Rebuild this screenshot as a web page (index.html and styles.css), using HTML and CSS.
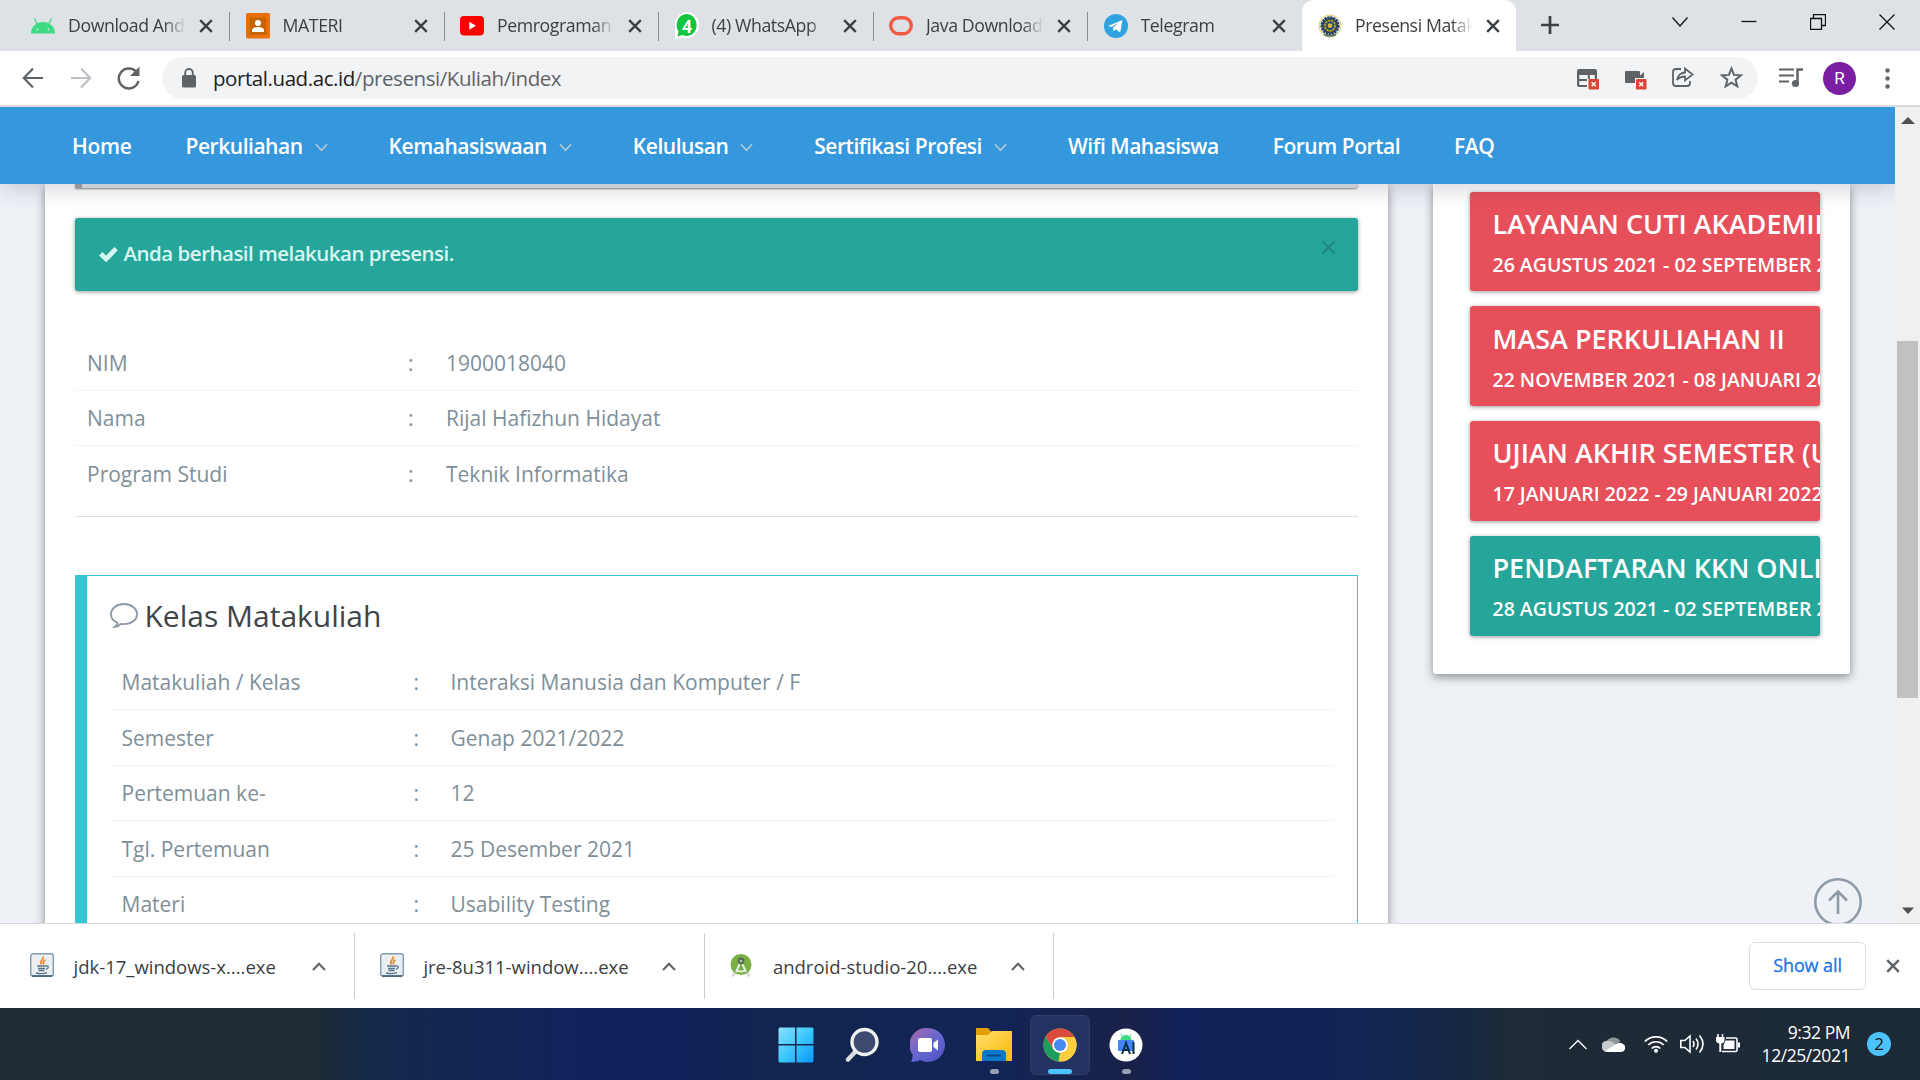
FILE: index.html
```html
<!DOCTYPE html>
<html lang="id">
<head>
<meta charset="utf-8">
<title>Presensi Matakuliah</title>
<link rel="stylesheet" href="styles.css">
</head>
<body>
<svg width="0" height="0" class="defs" aria-hidden="true">
  <symbol id="x" viewBox="0 0 14 14"><path d="M1.2 1.2l11.6 11.6M12.8 1.2L1.2 12.8" fill="none" stroke="currentColor" stroke-width="2.4"/></symbol>
  <symbol id="down" viewBox="0 0 14 9"><path d="M1 1l6 6.5L13 1" fill="none" stroke="currentColor" stroke-width="1.9"/></symbol>
  <symbol id="up" viewBox="0 0 14 9"><path d="M1 8l6-6.3L13 8" fill="none" stroke="currentColor" stroke-width="2.1"/></symbol>
  <symbol id="java" viewBox="0 0 24 24">
    <rect x=".7" y=".7" width="22.6" height="22.6" rx="2.5" fill="#eceff1" stroke="#7f9bb0" stroke-width="1.4"/>
    <path d="M2 23h20" stroke="#3f6076" stroke-width="1.6"/>
    <path d="M13 3.500c2 2.500-4.500 4-1.500 8M15.500 7c-3 1.500-2.500 3-1.500 4.500" fill="none" stroke="#ec8a2e" stroke-width="1.700"/>
    <path d="M7 13h9M8 15.500h7M8.500 17.500h6M6 20q6 1.500 11-.4M16 13q3-.3 2 1.800-.5 1-2 1.500" fill="none" stroke="#55758c" stroke-width="1.300"/>
  </symbol>
</svg>

<header class="tabs">
  <div class="tab">
    <svg class="fav" viewBox="0 0 24 24"><path d="M0 19.500a12 11.500 0 0 1 24 0z" fill="#3ddc84"/><path d="M6 10L3.600 4.500M18 10l2.400-5.500" stroke="#3ddc84" stroke-width="1.300"/><circle cx="6.500" cy="15.500" r="1" fill="#dee1e6"/><circle cx="17.500" cy="15.500" r="1" fill="#dee1e6"/></svg>
    <span class="tab-title">Download Android</span><svg class="tab-x"><use href="#x"/></svg>
  </div>
  <div class="tab sep">
    <svg class="fav" viewBox="0 0 24 24"><rect y="-1" width="24" height="25.500" rx="1.500" fill="#e8710a"/><rect x="3.500" y="3.500" width="17" height="17" fill="#c26401"/><circle cx="12" cy="9" r="3" fill="#fff"/><path d="M6 18v-2c0-4 12-4 12 0v2z" fill="#fff"/></svg>
    <span class="tab-title">MATERI</span><svg class="tab-x"><use href="#x"/></svg>
  </div>
  <div class="tab sep">
    <svg class="fav" viewBox="0 0 24 24"><rect y="2" width="24" height="19.500" rx="4" fill="#f00"/><path d="M9.300 7.700v8l6.700-4z" fill="#fff"/></svg>
    <span class="tab-title">Pemrograman Lanjut</span><svg class="tab-x"><use href="#x"/></svg>
  </div>
  <div class="tab sep">
    <svg class="fav" viewBox="0 0 24 24"><path d="M0 25V12A12 13 0 1 1 12 24l-6 .3z" fill="#fff"/><path d="M2.500 22.500l1-5a10 11 0 1 1 4 3.600z" fill="#12c53f"/><text x="12" y="18.500" text-anchor="middle" class="wa">4</text></svg>
    <span class="tab-title">(4) WhatsApp</span><svg class="tab-x"><use href="#x"/></svg>
  </div>
  <div class="tab sep">
    <svg class="fav" viewBox="0 0 24 24"><rect x="1.700" y="3.700" width="20.600" height="16" rx="8" fill="none" stroke="#f15b45" stroke-width="3.400"/></svg>
    <span class="tab-title">Java Downloads</span><svg class="tab-x"><use href="#x"/></svg>
  </div>
  <div class="tab sep">
    <svg class="fav" viewBox="0 0 24 24"><circle cx="12" cy="12" r="12" fill="#2fa3e0"/><path d="M4 12L18.500 6 16.200 18.500l-4.500-3.200-2.200 2.200-.4-4 6-5-7.600 4.600z" fill="#fff"/></svg>
    <span class="tab-title">Telegram</span><svg class="tab-x"><use href="#x"/></svg>
  </div>
  <div class="tab active">
    <svg class="fav" viewBox="0 0 24 24"><circle cx="12" cy="12" r="11" fill="#f4f0d8" stroke="#e0cd82" stroke-width="1"/><circle cx="12" cy="11.700" r="8" fill="#5c5b3c" stroke="#1d3e68" stroke-width="3" stroke-dasharray="2.200 .7"/><circle cx="12" cy="11.700" r="5" fill="#1a4d82" stroke="#d0a72b" stroke-width="1.500" stroke-dasharray="2 1"/><circle cx="12" cy="11.700" r="2.400" fill="#e0b329"/><path d="M6 20.500q6 3 12 0" fill="none" stroke="#54735f" stroke-width="1.500"/></svg>
    <span class="tab-title">Presensi Matakuliah</span><svg class="tab-x"><use href="#x"/></svg>
  </div>
  <svg class="plus" viewBox="0 0 18 18"><path d="M9 0v18M0 9h18" stroke="#3c4043" stroke-width="2.700"/></svg>
  <div class="win">
    <svg width="16" height="16" viewBox="0 0 16 16"><path d="M.5 3.500L8 12l7.500-8.500"/></svg>
    <svg width="16" height="16" viewBox="0 0 16 16"><path d="M.5 7.500h15"/></svg>
    <svg width="16" height="16" viewBox="0 0 16 16"><path d="M.5 4.500h11v11H.5zM3.500 4.500v-4h12v11h-4"/></svg>
    <svg width="16" height="16" viewBox="0 0 16 16"><path d="M.5.500l15 15M15.500.500l-15 15"/></svg>
  </div>
</header>

<div class="toolbar">
  <svg class="tb back" viewBox="0 0 24 24"><path d="M22 12H3.500M12 2.500L2.800 12l9.200 9.500" fill="none" stroke="#5f6368" stroke-width="2.200"/></svg>
  <svg class="tb fwd" viewBox="0 0 24 24"><path d="M2 12h18.500M12 2.500l9.200 9.500-9.200 9.500" fill="none" stroke="#bdc1c6" stroke-width="2.200"/></svg>
  <svg class="tb" viewBox="0 0 24 24"><path d="M19.500 6A10 10 0 1 0 21.500 15" fill="none" stroke="#5f6368" stroke-width="2.500"/><path d="M22.500 .5v9.500h-9.500z" fill="#5f6368"/></svg>
  <div class="omnibox">
    <svg width="14" height="20" viewBox="0 0 14 20"><rect y="7" width="14" height="12.500" rx="1.600" fill="#5f6368"/><path d="M3.200 8V4.800a3.800 3.800 0 0 1 7.600 0V8" fill="none" stroke="#5f6368" stroke-width="1.900"/></svg>
    <span class="url"><b>portal.uad.ac.id</b>/presensi/Kuliah/index</span>
    <svg class="ob low" viewBox="0 0 24 24"><path d="M2 1h16a2 2 0 0 1 2 2v8h-2.200V7h-5v4h-2V7H2.300v4H10v2H2.300v4H10v2H2a2 2 0 0 1-2-2V3a2 2 0 0 1 2-2z" fill="#5f6368"/><rect x="11.500" y="11" width="10.500" height="10.500" rx="1" fill="#dc4437"/><path d="M14.700 14.200l4 4M18.700 14.200l-4 4" stroke="#fff" stroke-width="1.500"/></svg>
    <svg class="ob low" viewBox="0 0 24 24"><path d="M1 3h13a1 1 0 0 1 1 1v3.500L19 4v6h-9v5H1a1 1 0 0 1-1-1V4a1 1 0 0 1 1-1z" fill="#5f6368"/><rect x="11" y="11" width="10.500" height="10.500" rx="1" fill="#dc4437"/><path d="M14.200 14.200l4 4M18.200 14.200l-4 4" stroke="#fff" stroke-width="1.500"/></svg>
    <svg class="ob share" viewBox="0 0 24 24" fill="none" stroke="#5f6368" stroke-width="1.800"><path d="M9 3H4a3 3 0 0 0-3 3V17a3 3 0 0 0 3 3h11a3 3 0 0 0 3-3v-2"/><path d="M5 14c1-5 3-7 8-7.500V2.500l7.500 6-7.500 6v-4c-4 0-6 1-8 3.500z"/></svg>
    <svg class="ob star" viewBox="0 0 24 24"><path d="M11.500 2.500l2.500 6.400 6.900.4-5.300 4.400 1.700 6.600-5.800-3.600-5.800 3.600 1.700-6.600L2 9.300l6.900-.4z" fill="none" stroke="#5f6368" stroke-width="2"/></svg>
  </div>
  <svg class="music" viewBox="0 0 24 20"><path d="M0 1.500h15M0 7.500h15M0 13.500h10" stroke="#5f6368" stroke-width="2"/><path d="M18.500 15V1.500H24" fill="none" stroke="#5f6368" stroke-width="2.500"/><circle cx="16.500" cy="15.500" r="3.600" fill="#5f6368"/></svg>
  <span class="avatar">R</span>
  <svg class="dots" viewBox="0 0 5 21"><g fill="#5f6368"><circle cx="2.500" cy="2.500" r="2.200"/><circle cx="2.500" cy="10.500" r="2.200"/><circle cx="2.500" cy="18.500" r="2.200"/></g></svg>
</div>

<div class="view">
  <div class="site">
    <nav class="nav">
      <a>Home</a>
      <a>Perkuliahan<svg><use href="#down"/></svg></a>
      <a>Kemahasiswaan<svg><use href="#down"/></svg></a>
      <a>Kelulusan<svg><use href="#down"/></svg></a>
      <a>Sertifikasi Profesi<svg><use href="#down"/></svg></a>
      <a>Wifi Mahasiswa</a>
      <a>Forum Portal</a>
      <a>FAQ</a>
    </nav>
    <div class="cols">
      <main class="panel">
        <div class="note"></div>
        <div class="alert">
          <svg class="check" viewBox="0 0 20 16"><path d="M1.800 7.800L7.500 13.200 18 2.400" fill="none" stroke="#d9f6f2" stroke-width="5"/></svg>
          <span>Anda berhasil melakukan presensi.</span>
          <svg class="close"><use href="#x"/></svg>
        </div>
        <div class="table student">
          <div class="row"><span>NIM</span><span>:</span><span>1900018040</span></div>
          <div class="row"><span>Nama</span><span>:</span><span>Rijal Hafizhun Hidayat</span></div>
          <div class="row"><span>Program Studi</span><span>:</span><span>Teknik Informatika</span></div>
        </div>
        <hr>
        <section class="kelas">
          <h3><svg viewBox="0 0 28 25"><path d="M7.500 19.800C3.500 18.200 1 15.200 1 11.300 1 5.600 6.600 1 14 1s13 4.500 13 10.200-5.800 9.900-13 9.900q-2 0-3.200-.3Q8.500 23.500 5 23.800q2.300-1.800 2.500-4z" fill="none" stroke="#8d98a8" stroke-width="1.900"/></svg><span>Kelas Matakuliah</span></h3>
          <div class="table">
            <div class="row"><span>Matakuliah / Kelas</span><span>:</span><span>Interaksi Manusia dan Komputer / F</span></div>
            <div class="row"><span>Semester</span><span>:</span><span>Genap 2021/2022</span></div>
            <div class="row"><span>Pertemuan ke-</span><span>:</span><span>12</span></div>
            <div class="row"><span>Tgl. Pertemuan</span><span>:</span><span>25 Desember 2021</span></div>
            <div class="row"><span>Materi</span><span>:</span><span>Usability Testing</span></div>
          </div>
        </section>
      </main>
      <aside class="panel side">
        <div class="event"><h4>LAYANAN CUTI AKADEMIK</h4><p>26 AGUSTUS 2021 - 02 SEPTEMBER 2021</p></div>
        <div class="event"><h4>MASA PERKULIAHAN II</h4><p>22 NOVEMBER 2021 - 08 JANUARI 2022</p></div>
        <div class="event"><h4>UJIAN AKHIR SEMESTER (UAS)</h4><p>17 JANUARI 2022 - 29 JANUARI 2022</p></div>
        <div class="event green"><h4>PENDAFTARAN KKN ONLINE</h4><p>28 AGUSTUS 2021 - 02 SEPTEMBER 2021</p></div>
      </aside>
    </div>
    <svg class="to-top" viewBox="0 0 48 48" fill="none" stroke="#8f9aa7" stroke-width="2.600"><circle cx="24" cy="24" r="22.700"/><path d="M24 36V14M15 22.500l9-9 9 9"/></svg>
  </div>
  <div class="scroll">
    <svg width="14" height="7" viewBox="0 0 14 7"><path d="M7 0l7 7H0z" fill="#505050"/></svg>
    <div class="track"><div class="thumb"></div></div>
    <svg width="12" height="7" viewBox="0 0 12 7"><path d="M6 7l6-6.500H0z" fill="#505050"/></svg>
  </div>
</div>

<div class="downloads">
  <div class="dl"><svg class="dl-i"><use href="#java"/></svg><span>jdk-17_windows-x....exe</span><svg class="dl-u"><use href="#up"/></svg></div>
  <div class="dl"><svg class="dl-i"><use href="#java"/></svg><span>jre-8u311-window....exe</span><svg class="dl-u"><use href="#up"/></svg></div>
  <div class="dl"><svg class="dl-i" viewBox="0 0 24 24"><path d="M8 15L3.500 23.500M16 15l4.500 8.500" stroke="#d5d5d5" stroke-width="2.400"/><circle cx="12" cy="11.500" r="10.500" fill="#78b043"/><path d="M12 8l-5 11M12 8l5 11M7 17q5 3 10 0" fill="none" stroke="#e8f0e0" stroke-width="2"/><circle cx="12" cy="8" r="3.400" fill="#5c6b60"/><circle cx="12" cy="8" r="1.300" fill="#b4c8ae"/></svg><span>android-studio-20....exe</span><svg class="dl-u"><use href="#up"/></svg></div>
  <div class="show-all">Show all</div>
  <svg class="dl-x"><use href="#x"/></svg>
</div>

<footer class="taskbar">
  <div class="apps">
    <div class="app"><svg width="36" height="36" viewBox="0 0 36 36"><defs><linearGradient id="w" x1="0" y1="0" x2="1" y2="1"><stop offset="0" stop-color="#8be0ff"/><stop offset=".5" stop-color="#3cc8fb"/><stop offset="1" stop-color="#0a96fa"/></linearGradient></defs><path d="M1.500.500H17v16.500H.500V1.500zM18.500.500h16l1 1V17h-17zM.500 18.500H17v17H1.500l-1-1zM18.500 18.500h17v16l-1 1h-16z" fill="url(#w)"/></svg></div>
    <div class="app"><svg width="34" height="36" viewBox="0 0 34 36"><path d="M10.500 24.500L3 32.500" stroke="#d9dcdf" stroke-width="4.500" stroke-linecap="round"/><circle cx="19.500" cy="15" r="12.500" fill="#3c4a6f" stroke="#f0f1f2" stroke-width="3.400"/></svg></div>
    <div class="app"><svg width="36" height="36" viewBox="0 0 36 36"><defs><linearGradient id="c" x1="0" y1=".1" x2=".8" y2="1"><stop offset="0" stop-color="#a26bae"/><stop offset=".55" stop-color="#6467d2"/><stop offset="1" stop-color="#5353c4"/></linearGradient></defs><path d="M18 1a17 17 0 1 1-8 32q-4 2.500-9 1.500 2-3 1.500-7A17 17 0 0 1 18 1z" fill="url(#c)"/><rect x="8" y="11" width="14" height="14" rx="2" fill="#fff"/><path d="M23.500 16l4.500-3.500v11L23.500 20z" fill="#fff"/></svg></div>
    <div class="app"><svg width="36" height="34" viewBox="0 0 36 34"><defs><linearGradient id="f" x1="0" y1="0" x2="1" y2="1"><stop offset="0" stop-color="#ffdf6d"/><stop offset="1" stop-color="#fcb90a"/></linearGradient></defs><path d="M0 0h12l3.500 4v8H0z" fill="#e3a006"/><path d="M0 7h12l4-4h20v30H0z" fill="url(#f)"/><path d="M6 33v-7q0-4 4-4h16q4 0 4 4v7z" fill="#0b78ca"/><path d="M11 27.500h14" stroke="#084c8c" stroke-width="2"/></svg><i></i></div>
    <div class="app current"><svg width="34" height="34" viewBox="0 0 34 34"><circle cx="17" cy="17" r="16.500" fill="#ffcd40"/><path d="M17 9h14.500A16.500 16.500 0 0 0 2.700 8.700L10 21z" fill="#db4a3f"/><path d="M2.700 8.700L10.200 21 17 25l-1.500 8.400A16.500 16.500 0 0 1 2.700 8.700z" fill="#1c9f5c"/><path d="M24 21l-7.500 12.500A16.500 16.500 0 0 0 31.500 9H17z" fill="#ffcd40"/><circle cx="17" cy="17" r="7.800" fill="#fff"/><circle cx="17" cy="17" r="6" fill="#4688f1"/></svg><i></i></div>
    <div class="app"><svg width="34" height="34" viewBox="0 0 34 34"><circle cx="17" cy="17" r="16.500" fill="#fff"/><rect x="9" y="12" width="16" height="11" rx="1" fill="#4285f4"/><path d="M11.500 12a5.500 5 0 0 1 11 0z" fill="#3ddc84"/><path d="M13 8l-1-2M21 8l1-2" stroke="#3ddc84"/><path d="M13 26l4-11 4 11M14 22h6M24.500 14v12" fill="none" stroke="#073042" stroke-width="2"/></svg><i></i></div>
  </div>
  <div class="tray">
    <svg width="18" height="11" viewBox="0 0 18 11"><path d="M.5 10L9 1.500l8.500 8.500" fill="none" stroke="#fff" stroke-width="1.300"/></svg>
    <svg class="cloud" viewBox="0 0 24 16"><path d="M4 15A5 5 0 0 1 4.500 5a8 7 0 0 1 14 0z" fill="#8d949a"/><path d="M4.500 16A5 5.500 0 0 1 5 5q3-1 6 1.500l6 4L8 16z" fill="#c5cacd"/><path d="M3 15l12-7.500q3-1.500 6 .500a4.300 4.300 0 0 1-1.500 8H5z" fill="#fff"/></svg>
    <svg class="wifi" viewBox="0 0 24 18"><g fill="none" stroke="#fff" stroke-width="1.700"><path d="M.8 6.500a15.800 15.800 0 0 1 22.400 0M4.300 10a10.800 10.800 0 0 1 15.400 0M7.700 13.500a6 6 0 0 1 8.600 0"/></g><circle cx="12" cy="15.800" r="2" fill="#fff"/></svg>
    <svg class="vol" viewBox="0 0 24 20"><g fill="none" stroke="#fff" stroke-width="1.600"><path d="M.8 6.500h4L10 2v16l-5.200-4.500h-4z"/><path d="M13 7q2 3 0 6M16 4.500q4 5.500 0 11M19.500 1.500q7 8.500 0 17"/></g></svg>
    <svg class="bat" viewBox="0 0 24 20"><path d="M2 0v3M6.500 0v3" stroke="#fff" stroke-width="1.600"/><path d="M0 3h8.500v3q0 3-3.200 3.500V18h-2V9.500Q0 9 0 6z" fill="#fff"/><path d="M10 4h9.500q1.500 0 1.500 1.500V16q0 1.500-1.500 1.500H6" fill="none" stroke="#fff" stroke-width="1.600"/><path d="M9.500 6.500h9V15H7.500v-4z" fill="#fff"/><path d="M22 8.500h2v5h-2z" fill="#fff"/></svg>
    <div class="clock"><div>9:32 PM</div><div>12/25/2021</div></div>
    <span class="badge">2</span>
  </div>
</footer>
</body>
</html>
```
FILE: styles.css
```css
* { box-sizing: border-box; }
body {
  margin: 0;
  width: 1920px;
  height: 1080px;
  overflow: hidden;
  display: flex;
  flex-direction: column;
  font-family: "Open Sans", "Noto Sans", sans-serif;
  background: #fff;
}
svg { display: block; flex: none; }
.defs { position: absolute; }

/* browser tabs */
.tabs { height: 51px; background: #dee1e6; display: flex; padding-left: 14.500px; flex: none; }
.tab { width: 214.500px; height: 51px; padding-left: 16.500px; display: flex; align-items: center; color: #3c4043; }
.tab.sep { background: linear-gradient(#8b8e93, #8b8e93) 0 12px / 1px 29px no-repeat; }
.tab.active { background: #fff; border-radius: 12px 12px 0 0; }
.fav { width: 24px; height: 24px; overflow: visible; }
.wa { font: bold 17px "Open Sans", sans-serif; fill: #fff; }
.tab-title {
  width: 120px; margin-left: 13px; padding-bottom: 1px; font-size: 17.700px; letter-spacing: -.4px;
  white-space: nowrap; overflow: hidden;
  -webkit-mask-image: linear-gradient(90deg, #000 80%, transparent 98%);
  mask-image: linear-gradient(90deg, #000 80%, transparent 98%);
}
.tab-x { width: 14px; height: 14px; margin-left: 11px; color: #3c4043; }
.plus { width: 18px; height: 18px; margin: 16px 0 0 25px; }
.win { display: flex; gap: 53px; margin: 14px 0 0 112.500px; }
.win svg { fill: none; stroke: #111; stroke-width: 1.300px; }

/* address bar */
.toolbar { height: 56px; flex: none; display: flex; align-items: center; padding: 0 0 0 21px; border-bottom: 2px solid #d9dadc; }
.tb { width: 24px; height: 24px; margin-right: 24px; }
.omnibox { width: 1596px; height: 42px; margin-left: -3px; padding: 0 14px 0 20px; border-radius: 21px; background: #f1f3f4; display: flex; align-items: center; }
.url { flex: 1; margin-left: 17px; font-size: 20.500px; letter-spacing: -.43px; color: #5f6368; white-space: nowrap; }
.url b { font-weight: 400; color: #202124; }
.ob { width: 24px; height: 24px; margin-left: 24px; overflow: visible; }
.low { margin: 3px 1px 0 23px; }
.share { margin-left: 22px; }
.star { margin-left: 24px; }
.music { width: 24px; height: 20px; margin-left: 21px; }
.avatar { width: 33px; height: 33px; margin-left: 20px; border-radius: 50%; background: #7b1fa2; color: #fff; font: 17px/33px Roboto, sans-serif; text-align: center; }
.dots { width: 5px; height: 21px; margin-left: 29px; }

/* portal page */
.view { height: 816px; flex: none; display: flex; overflow: hidden; }
.site { width: 1895px; height: 816px; position: relative; overflow: hidden; background: #eef1f6; color: #7f8f99; }
.nav { position: relative; z-index: 2; height: 77px; padding-left: 45px; display: flex; align-items: center; background: #3598dc; box-shadow: 0 4px 22px rgba(50, 50, 80, .22); }
.nav a { display: flex; align-items: center; padding: 1px 27px 0; color: #fff; font-size: 21px; font-weight: 600; letter-spacing: -.47px; white-space: nowrap; }
.nav a:first-child { letter-spacing: -.3px; }
.nav svg { width: 13px; height: 9px; margin: 2px 7px 0 12px; color: #b4c6d4; }
.cols { display: flex; align-items: flex-start; gap: 45px; padding-left: 45px; }
.panel { background: #fff; border-radius: 0 0 3px 3px; box-shadow: 0 3px 10px rgba(50, 55, 60, .55); }
main.panel { width: 1343px; height: 850px; padding: 0 30px; }
.note { height: 4px; border-left: 7px solid #a4a6a8; background: #e0e5ea; border-radius: 0 0 5px 0; box-shadow: 0 1px 2px rgba(0, 0, 0, .45); }
.alert { height: 73px; margin-top: 30px; padding: 0 22px 0 24px; display: flex; background: #26a69a; border-radius: 3px; color: #d9f6f2; font-size: 20.500px; font-weight: 600; letter-spacing: -.5px; box-shadow: 0 1px 4px rgba(0, 0, 0, .4); }
.alert span { flex: 1; margin-left: 5.500px; line-height: 71px; }
.check { width: 19px; height: 16px; margin-top: 28px; }
.close { width: 15px; height: 15px; margin-top: 22px; color: #218b83; }
.row { display: grid; grid-template-columns: 321px 38px 1fr; height: 55.500px; padding: 12.800px 12px 0; font-size: 21px; line-height: 30px; border-bottom: 1.500px solid #f1f4f7; }
.row:last-child { border: 0; }
.student { margin-top: 44px; }
hr { height: 1px; margin: 14px 0 0; border: 0; background: #dfe1e3; }
.kelas { margin-top: 58px; height: 440px; padding: 24px 23px 0; border: 1px solid #36c6d3; border-left-width: 12px; }
.kelas h3 { height: 32px; margin: 0 0 23px; display: flex; align-items: center; font-size: 30px; font-weight: 400; color: #3f444a; }
.kelas h3 svg { width: 28px; height: 25px; margin: 0 7px 0 -.5px; }
.kelas .row { grid-template-columns: 292px 37px 1fr; padding-left: 11.500px; }
.side { width: 417px; height: 490px; padding: 7.600px 30px 0 37px; }
.event { height: 99.750px; margin-bottom: 15px; padding: 15.400px 0 0 22.500px; overflow: hidden; border-radius: 3px; background: #e7505a; color: #fff; white-space: nowrap; box-shadow: 0 1px 4px rgba(0, 0, 0, .4); }
.green { background: #26a69a; }
.event h4, .event p { margin: 0; font-weight: 600; }
.event h4 { font-size: 27px; line-height: 34px; }
.event p { font-size: 19.500px; line-height: 30px; margin-top: 9px; }
.to-top { position: absolute; left: 1814px; top: 771px; width: 48px; height: 48px; }
.scroll { width: 25px; background: #f0f0f0; display: flex; flex-direction: column; align-items: center; padding: 10px 0 9px; }
.track { flex: 1; padding-top: 217px; }
.thumb { width: 21px; height: 357px; background: #c1c1c1; }

/* downloads shelf */
.downloads { height: 85px; flex: none; border-top: 1px solid #d9dadd; display: flex; align-items: center; background: #fff; color: #3c4043; }
.dl { width: 349.500px; height: 66px; padding-left: 24.500px; border-right: 1px solid #c9cbce; display: flex; align-items: center; }
.dl:first-child { width: 355.400px; padding-left: 30px; }
.dl-i { width: 24px; height: 24px; margin-top: -3px; }
.dl span { width: 239px; margin-left: 19.500px; font-size: 18.500px; white-space: nowrap; }
.dl-u { width: 14px; height: 9px; margin-left: -.5px; color: #5f6368; }
.show-all { width: 117px; height: 48px; margin: -1px 0 0 auto; border: 1px solid #dadce0; border-radius: 6px; text-align: center; font-size: 18px; line-height: 44px; color: #1a73e8; -webkit-text-stroke: .3px #1a73e8; letter-spacing: -.1px; }
.dl-x { width: 14px; height: 14px; margin: 0 20px; color: #5f6368; }

/* taskbar */
.taskbar { height: 72px; flex: none; display: flex; justify-content: space-between; padding-left: 766px; background: linear-gradient(90deg, #1f2c36 0, #1f2b33 310px, #14294a 370px, #10235a 560px, #102059 680px, #12254f 770px, #112455 1000px, #192148 1130px, #102058 1180px, #112455 1350px, #152843 1460px, #1e2b36 1510px, #1c2937 100%); }
.apps { display: flex; gap: 6px; padding-top: 7px; }
.app { width: 60px; height: 60px; display: flex; align-items: center; justify-content: center; position: relative; border-radius: 6px; }
.app:first-child svg { margin-left: -1px; }
.current { background: #233260; border: 1px solid #2f3d69; }
.app i { position: absolute; bottom: 1px; left: 26px; width: 9px; height: 5px; border-radius: 3px; background: #999eb4; }
.app.current i { width: 24px; left: 17px; bottom: 0; background: #4cc2ff; }
.tray { display: flex; align-items: center; color: #fff; padding-right: 29px; }
.cloud { width: 24px; height: 16px; margin-left: 15px; }
.wifi { width: 24px; height: 18px; margin-left: 18px; }
.vol { width: 24px; height: 20px; margin-left: 12px; }
.bat { width: 24px; height: 20px; margin-left: 12px; }
.clock { width: 110px; text-align: right; font-size: 17.500px; line-height: 23px; letter-spacing: -.45px; padding-bottom: 1px; }
.badge { width: 24px; height: 24px; margin-left: 17px; border-radius: 50%; background: #4cc2ff; color: #111; text-align: center; font-size: 17px; line-height: 24px; }
```
